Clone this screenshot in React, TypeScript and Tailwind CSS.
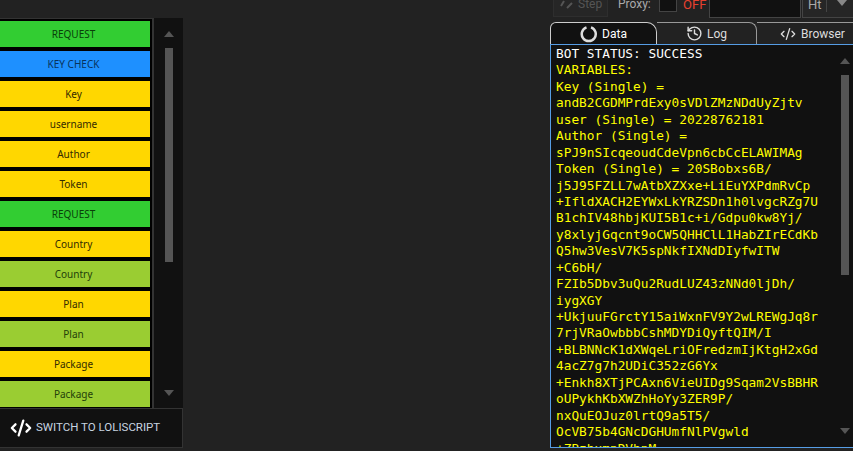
import React from 'react';
import { History, CodeXml } from 'lucide-react';

const blocks = [
  { label: 'REQUEST', color: 'bg-[#32cd32]', text: 'text-[#0a3f0a]' },
  { label: 'KEY CHECK', color: 'bg-[#1e90ff]', text: 'text-[#08345e]' },
  { label: 'Key', color: 'bg-[#ffd700]', text: 'text-[#332b00]' },
  { label: 'username', color: 'bg-[#ffd700]', text: 'text-[#332b00]' },
  { label: 'Author', color: 'bg-[#ffd700]', text: 'text-[#332b00]' },
  { label: 'Token', color: 'bg-[#ffd700]', text: 'text-[#332b00]' },
  { label: 'REQUEST', color: 'bg-[#32cd32]', text: 'text-[#0a3f0a]' },
  { label: 'Country', color: 'bg-[#ffd700]', text: 'text-[#332b00]' },
  { label: 'Country', color: 'bg-[#9acd32]', text: 'text-[#23400a]' },
  { label: 'Plan', color: 'bg-[#ffd700]', text: 'text-[#332b00]' },
  { label: 'Plan', color: 'bg-[#9acd32]', text: 'text-[#23400a]' },
  { label: 'Package', color: 'bg-[#ffd700]', text: 'text-[#332b00]' },
  { label: 'Package', color: 'bg-[#9acd32]', text: 'text-[#23400a]' },
];

const lines = [
  'VARIABLES:',
  'Key (Single) =',
  'andB2CGDMPrdExy0sVDlZMzNDdUyZjtv',
  'user (Single) = 20228762181',
  'Author (Single) =',
  'sPJ9nSIcqeoudCdeVpn6cbCcELAWIMAg',
  'Token (Single) = 20SBobxs6B/',
  'j5J95FZLL7wAtbXZXxe+LiEuYXPdmRvCp',
  '+IfldXACH2EYWxLkYRZSDn1h0lvgcRZg7U',
  'B1chIV48hbjKUI5B1c+i/Gdpu0kw8Yj/',
  'y8xlyjGqcnt9oCW5QHHClL1HabZIrECdKb',
  'Q5hw3VesV7K5spNkfIXNdDIyfwITW',
  '+C6bH/',
  'FZIb5Dbv3uQu2RudLUZ43zNNd0ljDh/',
  'iygXGY',
  '+UkjuuFGrctY15aiWxnFV9Y2wLREWgJq8r',
  '7rjVRaOwbbbCshMDYDiQyftQIM/I',
  '+BLBNNcK1dXWqeLriOFredzmIjKtgH2xGd',
  '4acZ7g7h2UDiC352zG6Yx',
  '+Enkh8XTjPCAxn6VieUIDg9Sqam2VsBBHR',
  'oUPykhKbXWZhHoYy3ZER9P/',
  'nxQuEOJuz0lrtQ9a5T5/',
  'OcVB75b4GNcDGHUmfNlPVgwld',
  '+ZBzhxmpDVhpM',
];

const ArrowUp = () => <div className="w-0 h-0 shrink-0 border-x-[5px] border-x-transparent border-b-[6px] border-b-[#555]" />;
const ArrowDown = () => <div className="w-0 h-0 shrink-0 border-x-[5px] border-x-transparent border-t-[6px] border-t-[#555]" />;

export default function App() {
  return (
    <div className="w-[853px] h-[451px] bg-[#222222] overflow-hidden flex justify-between font-['Roboto',sans-serif]">
      <div className="w-[183px] flex flex-col pt-[18px] shrink-0">
        <div className="h-[390px] flex overflow-hidden">
          <div className="w-[154px] shrink-0 bg-black border-t border-t-[#333] border-r-2 border-r-[#333] pt-[2px] overflow-hidden flex flex-col gap-[4px]">
            {blocks.map((b, i) => (
              <div key={i} className={`h-[26px] shrink-0 w-[150px] pr-[3px] flex items-center justify-center text-[10px] font-['Noto_Sans',sans-serif] ${b.color} ${b.text}`}>
                {b.label}
              </div>
            ))}
          </div>
          <div className="flex-1 bg-[#111111] flex flex-col items-center pt-[13px] pb-[12px]">
            <ArrowUp />
            <div className="w-[8px] h-[214px] bg-[#555555] mt-[11px]" />
            <div className="flex-1" />
            <ArrowDown />
          </div>
        </div>
        <div className="h-[40px] bg-[#111111] border border-[#333] border-l-0 flex items-center pl-[10px] gap-[4px] text-[11.5px] text-[#c8d4e0]">
          <CodeXml size={22} strokeWidth={2.5} className="text-white" />
          <span>SWITCH TO LOLISCRIPT</span>
        </div>
      </div>

      <div className="w-[303px] flex flex-col shrink-0">
        <div className="h-[22px] flex items-start text-[12px] leading-[17px] overflow-hidden">
          <div className="w-[55px] h-[17px] ml-[3px] shrink-0 bg-[#262626] border border-t-0 border-[#2e2e2e] text-[#555] pl-[6px] flex gap-[4px]">
            <svg width="14" height="10" viewBox="0 0 14 10" fill="none" stroke="#555" strokeWidth="2" className="shrink-0">
              <path d="M1 6 L4 1 M7 8 L12 3" />
            </svg>
            <span className="-mt-[4px]">Step</span>
          </div>
          <span className="w-[32px] shrink-0 ml-[10px] -mt-[4px] text-[#aaaaaa]">Proxy:</span>
          <div className="w-[18px] h-[12px] ml-[9px] bg-[#111] border border-[#444] border-t-0 shrink-0" />
          <span className="w-[21px] shrink-0 ml-[6px] -mt-[4px] text-[13px] text-[#e8402f]">OFF</span>
          <div className="w-[92px] h-[18px] ml-[5px] bg-[#111] border-x border-b border-[#444] shrink-0" />
          <div className="flex-1 h-[18px] ml-[1px] bg-[#262626] border-l border-b border-[#444] flex">
            <span className="w-[14px] shrink-0 ml-[5px] -mt-[4px] text-[13px] text-[#aaaaaa]">Ht</span>
            <div className="w-px h-[12px] bg-[#444] ml-[4px] shrink-0" />
            <div className="w-0 h-0 ml-[10px] border-x-[5px] border-x-transparent border-t-[6px] border-t-[#888]" />
          </div>
        </div>
        <div className="h-[22px] flex text-[12px] text-[#dddddd]">
          <div className="w-[107px] bg-[#111] border border-[#cccccc] border-b-0 rounded-tl-[6px] rounded-tr-[10px] flex items-center justify-center gap-[4px] text-white">
            <svg width="18" height="18" viewBox="0 0 18 18" fill="none" stroke="#dddddd" strokeWidth="2.5">
              <path d="M11 2.4 a7 7 0 1 1 -4.5 0" />
            </svg>
            <span>Data</span>
          </div>
          <div className="w-[100px] border-t border-r border-[#999999] rounded-tr-[8px] flex items-center justify-center gap-[4px]">
            <History size={17} />
            <span>Log</span>
          </div>
          <div className="flex-1 border-t border-[#999999] flex items-center pl-[23px] gap-[5px]">
            <CodeXml size={16} />
            <span>Browser</span>
          </div>
        </div>
        <div className="h-[404px] shrink-0 bg-[#111111] border border-r-0 border-[#569de5] flex overflow-hidden">
          <div className="flex-1 pl-[5px] pt-[1px] overflow-hidden font-['DejaVu_Sans_Mono',monospace] text-[12.8px] leading-[16.43px] whitespace-pre">
            <div className="text-white">BOT STATUS: SUCCESS</div>
            {lines.map((l, i) => (
              <div key={i} className="text-[#ffff00]">{l}</div>
            ))}
          </div>
          <div className="w-[16px] flex flex-col items-center pt-[13px] pb-[13px] shrink-0">
            <ArrowUp />
            <div className="w-[8px] h-[200px] bg-[#555555] mt-[11px]" />
            <div className="flex-1" />
            <ArrowDown />
          </div>
        </div>
      </div>
    </div>
  );
}
